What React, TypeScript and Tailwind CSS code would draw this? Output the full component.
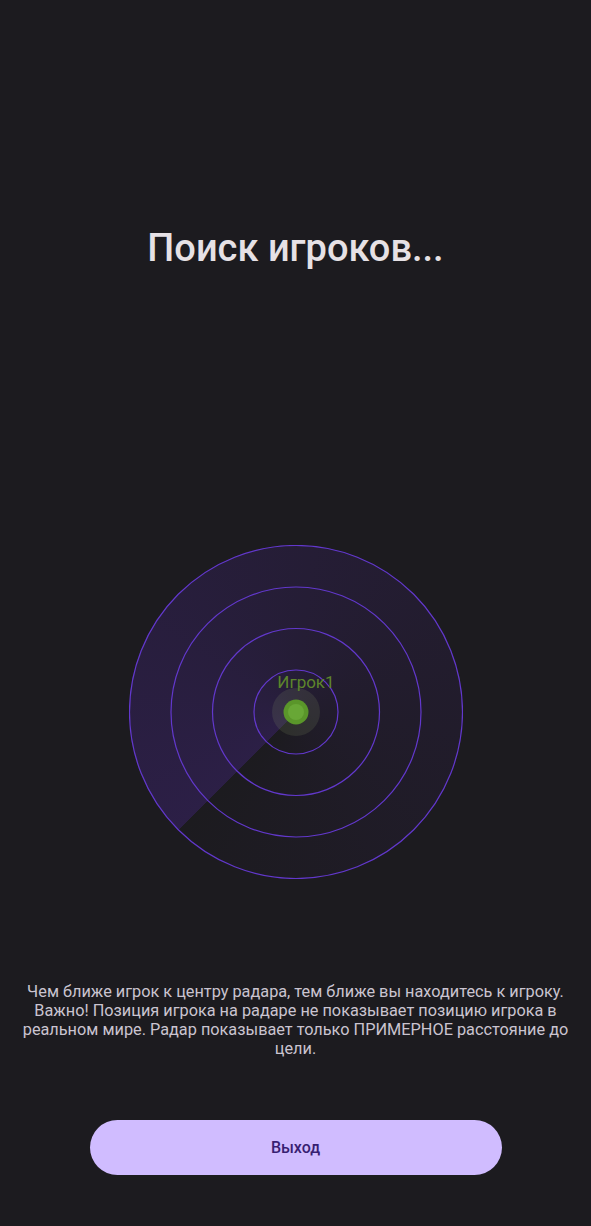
const rings = [166.5, 125, 83.5, 42];

function Radar() {
  return (
    <div className="relative h-[334px] w-[334px]">
      {/* sweep */}
      <div className="absolute inset-0 rounded-full bg-[conic-gradient(from_225deg,rgba(80,40,160,0.3)_0deg,rgba(75,38,150,0.24)_90deg,rgba(70,35,130,0.15)_200deg,rgba(60,30,110,0.04)_330deg,rgba(30,27,36,0)_360deg)]" />
      <svg className="absolute inset-0" width="334" height="334" viewBox="0 0 334 334">
        {rings.map((r) => (
          <circle key={r} cx="167" cy="167" r={r} fill="none" stroke="#6238cc" strokeWidth="1.2" />
        ))}
        <circle cx="167" cy="167" r="24" fill="#8a9a6a" fillOpacity="0.16" />
        <circle cx="167" cy="167" r="12.5" fill="#5a962a" />
        <circle cx="167" cy="167" r="8" fill="#6cab3a" fillOpacity="0.8" />
        <text
          x="177"
          y="143"
          textAnchor="middle"
          fontFamily="Roboto, sans-serif"
          fontSize="17"
          fill="#5d852b"
        >
          Игрок1
        </text>
      </svg>
    </div>
  );
}

export default function App() {
  return (
    <div className="flex min-h-[1226px] w-full flex-col items-center bg-[#1c1b1f] font-['Roboto',sans-serif]">
      <h1 className="pt-[225px] text-[38px] font-medium leading-[46px] text-[#e6e1e5]">
        Поиск игроков...
      </h1>

      <div className="mt-[274px]">
        <Radar />
      </div>

      <p className="mt-[103px] px-[18px] text-center text-[16.3px] leading-[19px] text-[#cac4d0]">
        Чем ближе игрок к центру радара, тем ближе вы находитесь к игроку. Важно! Позиция игрока
        на радаре не показывает позицию игрока в реальном мире. Радар показывает только
        ПРИМЕРНОЕ расстояние до цели.
      </p>

      <button className="mt-[62px] h-[55px] w-[412px] rounded-full bg-[#d0bcff] text-[16px] font-medium text-[#381e72]">
        Выход
      </button>
    </div>
  );
}
